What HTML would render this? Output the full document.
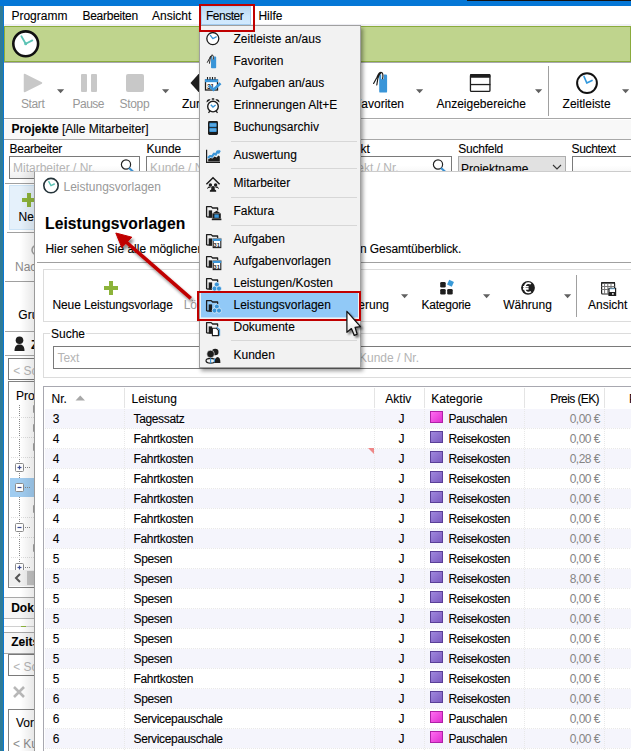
<!DOCTYPE html>
<html><head><meta charset="utf-8"><style>
html,body{margin:0;padding:0;width:631px;height:751px;overflow:hidden;background:#fff;font-family:"Liberation Sans", sans-serif;}
.a{position:absolute;display:block}
.t{position:absolute;white-space:nowrap;font-family:"Liberation Sans", sans-serif;-webkit-text-stroke-width:0.1px}
</style></head><body>
<div class="a" style="left:0px;top:0px;width:3px;height:751px;background:#2e7b97"></div><div class="a" style="left:3px;top:0px;width:1px;height:751px;background:#0b78d4"></div><div class="a" style="left:0px;top:0px;width:631px;height:6px;background:#0577d6"></div><div class="a" style="left:467px;top:0px;width:164px;height:1px;background:#151515"></div><div class="a" style="left:4px;top:6px;width:627px;height:18px;background:#fff"></div><div class="a" style="left:4px;top:24px;width:627px;height:2px;background:#f0f0f6"></div><div class="t " style="left:11.4px;top:9.00px;font-size:12px;line-height:14px;color:#000;letter-spacing:0px">Programm</div><div class="t " style="left:82.4px;top:9.00px;font-size:12px;line-height:14px;color:#000;letter-spacing:-0.25px">Bearbeiten</div><div class="t " style="left:152px;top:9.00px;font-size:12px;line-height:14px;color:#000;letter-spacing:0px">Ansicht</div><div class="t " style="left:258.4px;top:9.00px;font-size:12px;line-height:14px;color:#000;letter-spacing:0px">Hilfe</div><div class="a" style="left:201px;top:6px;width:50px;height:19px;background:linear-gradient(#bcd6ee,#cce6fc 55%,#d2eaff);box-sizing:border-box;border:1px solid #a6d0f4"></div><div class="t " style="left:206px;top:9.00px;font-size:12px;line-height:14px;color:#000;letter-spacing:-0.5px">Fenster</div><div class="a" style="left:4px;top:26px;width:627px;height:36px;background:#bfd48d;box-sizing:border-box;border:1px solid #8aab3c"></div><div class="a" style="left:4px;top:62px;width:627px;height:1px;background:#a8a8b0"></div><svg class="a" style="left:10px;top:28px;" width="32" height="32" viewBox="0 0 32 32"><circle cx="15.7" cy="15.8" r="12.4" fill="#fff" stroke="#111" stroke-width="2.6"/><path d="M11.4 8.2 L15.7 15.8 L22.3 12.4" fill="none" stroke="#5cc3b5" stroke-width="1.8" stroke-linecap="round" stroke-linejoin="round"/><circle cx="15.7" cy="15.8" r="1.5" fill="#5cc3b5"/></svg><div class="a" style="left:4px;top:63px;width:627px;height:55px;background:#fff"></div><div class="a" style="left:4px;top:118px;width:627px;height:1px;background:#a8a8a8"></div><svg class="a" style="left:22px;top:72px;" width="24" height="22" viewBox="0 0 24 22"><path d="M2.5 2.5 L19.5 11 L2.5 19.5 Z" fill="#c8c8c8" stroke="#c8c8c8" stroke-width="1.5" stroke-linejoin="round"/></svg><svg class="a" style="left:57px;top:89px;" width="8" height="5" viewBox="0 0 8 5"><path d="M0 0.2 H7.2 L3.6 4.2 Z" fill="#606060"/></svg><div class="t " style="left:21px;top:97.00px;font-size:12px;line-height:14px;color:#989898;-webkit-text-stroke-width:0;letter-spacing:-0.4px">Start</div><div class="a" style="left:81px;top:74px;width:6px;height:18px;background:#c8c8c8;border-radius:1px"></div><div class="a" style="left:91px;top:74px;width:6px;height:18px;background:#c8c8c8;border-radius:1px"></div><div class="t " style="left:72.5px;top:97.00px;font-size:12px;line-height:14px;color:#989898;-webkit-text-stroke-width:0;letter-spacing:-0.5px">Pause</div><div class="a" style="left:126px;top:74px;width:18px;height:18px;background:#c8c8c8;border-radius:2px"></div><div class="t " style="left:119.5px;top:97.00px;font-size:12px;line-height:14px;color:#989898;-webkit-text-stroke-width:0;letter-spacing:-0.3px">Stopp</div><svg class="a" style="left:162px;top:88.5px;" width="8" height="5" viewBox="0 0 8 5"><path d="M0 0.2 H7.2 L3.6 4.2 Z" fill="#606060"/></svg><svg class="a" style="left:189px;top:73px;" width="12" height="20" viewBox="0 0 12 20"><path d="M1.5 10 L9.5 1 L11 1 L11 19 L9.5 19 Z" fill="#1e1e1e"/></svg><div class="t " style="left:182px;top:97.00px;font-size:12px;line-height:14px;color:#000;">Zurück</div><svg class="a" style="left:371px;top:71px;" width="20" height="24" viewBox="0 0 20 24"><path d="M9.4 3.6 H10.2 V7.2 C10.2 8.6 12.8 8.6 12.8 7.2 V3.6 H14.9 Q16.1 3.6 16.1 4.8 V20.4 Q16.1 21.6 14.9 21.6 H9.4 Q8.2 21.6 8.2 20.4 V4.8 Q8.2 3.6 9.4 3.6 Z" fill="#3a95d8"/><path d="M11.6 7.8 C12.4 4 11.8 1.4 10 1.4 C8.2 1.4 7 3.6 6 6.2 L2.6 12.5 M9.6 2.2 C8.2 3 7.4 5.4 6.8 7.6 L5.8 14" fill="none" stroke="#1a1a1a" stroke-width="1.15" stroke-linecap="round"/></svg><div class="t" style="right:227px;top:97.00px;font-size:12px;line-height:14px;color:#000;">Favoriten</div><svg class="a" style="left:415.5px;top:88.5px;" width="8" height="5" viewBox="0 0 8 5"><path d="M0 0.2 H7.2 L3.6 4.2 Z" fill="#606060"/></svg><svg class="a" style="left:469px;top:73px;" width="22" height="20" viewBox="0 0 22 20"><rect x="1.45" y="1.65" width="19.5" height="16.8" rx="1" fill="#fff" stroke="#1e1e1e" stroke-width="1.3"/><rect x="1" y="1.1" width="20.4" height="3.6" rx="1" fill="#1e1e1e"/><rect x="1" y="10.9" width="20.4" height="1.3" fill="#1e1e1e"/></svg><div class="t " style="left:436.5px;top:97.00px;font-size:12px;line-height:14px;color:#000;">Anzeigebereiche</div><svg class="a" style="left:534.7px;top:88.5px;" width="8" height="5" viewBox="0 0 8 5"><path d="M0 0.2 H7.2 L3.6 4.2 Z" fill="#606060"/></svg><div class="a" style="left:548px;top:66px;width:1px;height:50px;background:#a0a0a0"></div><svg class="a" style="left:574px;top:70px;" width="26" height="26" viewBox="0 0 26 26"><circle cx="13" cy="13.1" r="9.9" fill="#fff" stroke="#111" stroke-width="2.0"/><path d="M10 6.5 L12.8 13 L18 10.5" fill="none" stroke="#3399dd" stroke-width="1.7" stroke-linecap="round" stroke-linejoin="round"/></svg><div class="t " style="left:562.6px;top:97.00px;font-size:12px;line-height:14px;color:#000;">Zeitleiste</div><svg class="a" style="left:622px;top:88.5px;" width="8" height="5" viewBox="0 0 8 5"><path d="M0 0.2 H7.2 L3.6 4.2 Z" fill="#606060"/></svg><div class="a" style="left:4px;top:120px;width:627px;height:19px;background:#f8f8f8"></div><div class="a" style="left:4px;top:139px;width:627px;height:1px;background:#a8a8a8"></div><div class="t " style="left:11.4px;top:122.00px;font-size:12px;line-height:14px;color:#000;font-weight:bold;">Projekte</div><div class="t " style="left:62px;top:122.00px;font-size:12px;line-height:14px;color:#000;">[Alle Mitarbeiter]</div><div class="t " style="left:9.6px;top:142.00px;font-size:12px;line-height:14px;color:#000;letter-spacing:-0.3px">Bearbeiter</div><div class="t " style="left:146.6px;top:142.00px;font-size:12px;line-height:14px;color:#000;">Kunde</div><div class="t " style="left:332.5px;top:142.00px;font-size:12px;line-height:14px;color:#000;">Projekt</div><div class="t " style="left:458.3px;top:142.00px;font-size:12px;line-height:14px;color:#000;letter-spacing:-0.25px">Suchfeld</div><div class="t " style="left:571.5px;top:142.00px;font-size:12px;line-height:14px;color:#000;letter-spacing:-0.35px">Suchtext</div><div class="a" style="left:9px;top:156px;width:131px;height:23px;box-sizing:border-box;border:1px solid #7a7a7a;background:linear-gradient(#fff 40%,#f0f0f0)"></div><div class="t " style="left:13px;top:161.00px;font-size:12px;line-height:14px;color:#b4b4b4;-webkit-text-stroke-width:0;">Mitarbeiter / Nr.</div><svg class="a" style="left:120px;top:159px;" width="16" height="14" viewBox="0 0 16 14"><circle cx="6" cy="5.5" r="4.6" fill="none" stroke="#222" stroke-width="1.2"/><path d="M9 9 L13.5 13" stroke="#3a8fd0" stroke-width="2.2"/></svg><div class="a" style="left:146px;top:156px;width:160px;height:23px;box-sizing:border-box;border:1px solid #7a7a7a;background:linear-gradient(#fff 40%,#f0f0f0)"></div><div class="t " style="left:150px;top:161.00px;font-size:12px;line-height:14px;color:#b4b4b4;-webkit-text-stroke-width:0;">Kunde / Nr.</div><div class="a" style="left:332px;top:156px;width:120px;height:23px;box-sizing:border-box;border:1px solid #7a7a7a;background:linear-gradient(#fff 40%,#f0f0f0)"></div><div class="t " style="left:336px;top:161.00px;font-size:12px;line-height:14px;color:#b4b4b4;-webkit-text-stroke-width:0;">Projekt / Nr.</div><svg class="a" style="left:432px;top:159px;" width="16" height="14" viewBox="0 0 16 14"><circle cx="6" cy="5.5" r="4.6" fill="none" stroke="#222" stroke-width="1.2"/><path d="M9 9 L13.5 13" stroke="#3a8fd0" stroke-width="2.2"/></svg><div class="a" style="left:458px;top:156px;width:108px;height:23px;box-sizing:border-box;border:1px solid #adadad;background:#e1e1e1"></div><div class="t " style="left:461px;top:162.00px;font-size:12px;line-height:14px;color:#000;">Projektname</div><svg class="a" style="left:552px;top:164px;" width="10" height="6" viewBox="0 0 10 6"><path d="M1 1 L5 5 L9 1" fill="none" stroke="#333" stroke-width="1.1"/></svg><div class="a" style="left:572px;top:156px;width:70px;height:23px;box-sizing:border-box;border:1px solid #7a7a7a;background:linear-gradient(#fff 40%,#f0f0f0)"></div><div class="a" style="left:4px;top:179px;width:30px;height:572px;background:#fff"></div><div class="a" style="left:5px;top:183px;width:29px;height:1px;background:#a0a0a0"></div><div class="a" style="left:9px;top:185px;width:30px;height:45px;box-sizing:border-box;border:1px solid #cce4f7;background:#e5f1fb"></div><div class="a" style="left:27px;top:193px;width:4px;height:14px;background:#8cb33a"></div><div class="a" style="left:22px;top:198px;width:14px;height:4px;background:#8cb33a"></div><div class="t " style="left:18.6px;top:210.00px;font-size:12px;line-height:14px;color:#000;">Neue</div><div class="a" style="left:7px;top:232px;width:27px;height:1px;background:#a0a0a0"></div><svg class="a" style="left:29px;top:244px;" width="8" height="12" viewBox="0 0 8 12"><circle cx="8" cy="6" r="5" fill="none" stroke="#a0a0a0" stroke-width="1.5"/></svg><div class="t " style="left:15px;top:260.00px;font-size:12px;line-height:14px;color:#8c8c8c;-webkit-text-stroke-width:0;">Nachbearb</div><div class="a" style="left:5px;top:281px;width:29px;height:1px;background:#a0a0a0"></div><div class="t " style="left:18.3px;top:308.00px;font-size:12px;line-height:14px;color:#000;">Gruppe</div><div class="a" style="left:5px;top:331px;width:29px;height:1px;background:#a8a8a8"></div><svg class="a" style="left:14px;top:336px;" width="12" height="16" viewBox="0 0 12 16"><circle cx="5.5" cy="4.2" r="3.8" fill="#1e1e1e"/><path d="M0.5 15 C0.5 10 2.5 8.5 5.5 8.5 C8.5 8.5 10.5 10 10.5 15 Z" fill="#1e1e1e"/></svg><div class="t " style="left:31px;top:338.00px;font-size:12px;line-height:14px;color:#000;font-weight:bold;">Z</div><div class="a" style="left:5px;top:355px;width:29px;height:1px;background:#a8a8a8"></div><div class="a" style="left:8px;top:358px;width:30px;height:22px;box-sizing:border-box;border:1px solid #7a7a7a;background:#fff"></div><div class="t " style="left:13.2px;top:364.00px;font-size:12px;line-height:14px;color:#b4b4b4;-webkit-text-stroke-width:0;">&lt; Sc</div><div class="a" style="left:8px;top:381px;width:30px;height:207px;box-sizing:border-box;border:1px solid #828282;background:#fff"></div><div class="t " style="left:16px;top:389.00px;font-size:12px;line-height:14px;color:#000;">Projekte</div><div class="a" style="left:19px;top:405px;width:1px;height:164px;background-image:linear-gradient(#888 50%, transparent 50%);background-size:1px 2px"></div><div class="a" style="left:11px;top:417px;width:23px;height:1px;background-image:linear-gradient(90deg,#ddd 50%, transparent 50%);background-size:2px 1px"></div><div class="a" style="left:11px;top:437px;width:23px;height:1px;background-image:linear-gradient(90deg,#ddd 50%, transparent 50%);background-size:2px 1px"></div><div class="a" style="left:11px;top:457px;width:23px;height:1px;background-image:linear-gradient(90deg,#ddd 50%, transparent 50%);background-size:2px 1px"></div><div class="a" style="left:11px;top:517px;width:23px;height:1px;background-image:linear-gradient(90deg,#ddd 50%, transparent 50%);background-size:2px 1px"></div><div class="a" style="left:11px;top:537px;width:23px;height:1px;background-image:linear-gradient(90deg,#ddd 50%, transparent 50%);background-size:2px 1px"></div><div class="a" style="left:11px;top:557px;width:23px;height:1px;background-image:linear-gradient(90deg,#ddd 50%, transparent 50%);background-size:2px 1px"></div><div class="a" style="left:33px;top:405px;width:2px;height:8px;background:#a0a0a0;border-radius:1px"></div><div class="a" style="left:33px;top:424px;width:2px;height:8px;background:#a0a0a0;border-radius:1px"></div><div class="a" style="left:33px;top:443px;width:2px;height:8px;background:#a0a0a0;border-radius:1px"></div><div class="a" style="left:33px;top:505px;width:2px;height:8px;background:#a0a0a0;border-radius:1px"></div><div class="a" style="left:33px;top:544px;width:2px;height:8px;background:#a0a0a0;border-radius:1px"></div><div class="a" style="left:10px;top:478px;width:24px;height:19px;background:#a0ccf0"></div><svg class="a" style="left:15px;top:463px;" width="9" height="9" viewBox="0 0 9 9"><rect x="0.5" y="0.5" width="8" height="8" rx="1" fill="#fff" stroke="#8a8a8a"/><path d="M2.5 4.5 H6.5" stroke="#3a4a90" stroke-width="1.2"/><path d="M4.5 2.5 V6.5" stroke="#3a4a90" stroke-width="1.2"/></svg><div class="a" style="left:25px;top:467px;width:6px;height:1px;background-image:linear-gradient(90deg,#888 50%, transparent 50%);background-size:2px 1px"></div><svg class="a" style="left:15px;top:483px;" width="9" height="9" viewBox="0 0 9 9"><rect x="0.5" y="0.5" width="8" height="8" rx="1" fill="#fff" stroke="#8a8a8a"/><path d="M2.5 4.5 H6.5" stroke="#3a4a90" stroke-width="1.2"/></svg><div class="a" style="left:25px;top:487px;width:6px;height:1px;background-image:linear-gradient(90deg,#888 50%, transparent 50%);background-size:2px 1px"></div><svg class="a" style="left:15px;top:523px;" width="9" height="9" viewBox="0 0 9 9"><rect x="0.5" y="0.5" width="8" height="8" rx="1" fill="#fff" stroke="#8a8a8a"/><path d="M2.5 4.5 H6.5" stroke="#3a4a90" stroke-width="1.2"/></svg><div class="a" style="left:25px;top:527px;width:6px;height:1px;background-image:linear-gradient(90deg,#888 50%, transparent 50%);background-size:2px 1px"></div><svg class="a" style="left:15px;top:563px;" width="9" height="9" viewBox="0 0 9 9"><rect x="0.5" y="0.5" width="8" height="8" rx="1" fill="#fff" stroke="#8a8a8a"/><path d="M2.5 4.5 H6.5" stroke="#3a4a90" stroke-width="1.2"/><path d="M4.5 2.5 V6.5" stroke="#3a4a90" stroke-width="1.2"/></svg><div class="a" style="left:25px;top:567px;width:6px;height:1px;background-image:linear-gradient(90deg,#888 50%, transparent 50%);background-size:2px 1px"></div><div class="a" style="left:9px;top:570px;width:30px;height:16px;background:#f0f0f0"></div><svg class="a" style="left:14px;top:573px;" width="8" height="10" viewBox="0 0 8 10"><path d="M6 1 L2 5 L6 9" fill="none" stroke="#555" stroke-width="2"/></svg><div class="a" style="left:27px;top:571px;width:10px;height:14px;background:#c2c2c2"></div><div class="a" style="left:4px;top:597px;width:30px;height:1px;background:#a8a8a8"></div><div class="a" style="left:4px;top:598px;width:30px;height:20px;background:#f6f6f6"></div><div class="t " style="left:11.2px;top:601.00px;font-size:12px;line-height:14px;color:#000;font-weight:bold;">Dokumente</div><div class="a" style="left:4px;top:618px;width:30px;height:1px;background:#b8b8b8"></div><div class="a" style="left:4px;top:626px;width:30px;height:1px;background:#d0d0d0"></div><div class="a" style="left:21px;top:626px;width:5px;height:1px;background:#8cb33a"></div><div class="a" style="left:4px;top:632px;width:30px;height:1px;background:#a8a8a8"></div><div class="a" style="left:4px;top:633px;width:30px;height:20px;background:#f6f6f6"></div><div class="t " style="left:11.2px;top:635.00px;font-size:12px;line-height:14px;color:#000;font-weight:bold;">Zeitstempel</div><div class="a" style="left:4px;top:653px;width:30px;height:1px;background:#a8a8a8"></div><div class="a" style="left:8px;top:654px;width:30px;height:22px;box-sizing:border-box;border:1px solid #7a7a7a;background:#fff"></div><div class="t " style="left:13.2px;top:660.00px;font-size:12px;line-height:14px;color:#b4b4b4;-webkit-text-stroke-width:0;">&lt; Sc</div><svg class="a" style="left:12px;top:685px;" width="14" height="14" viewBox="0 0 14 14"><path d="M2 2 L12 12 M12 2 L2 12" stroke="#b8b8b8" stroke-width="2.6"/></svg><div class="a" style="left:8px;top:709px;width:30px;height:50px;box-sizing:border-box;border:1px solid #828282;background:#fff"></div><div class="t " style="left:16px;top:716.00px;font-size:12px;line-height:14px;color:#000;">Vorlage</div><div class="t " style="left:13px;top:737.00px;font-size:12px;line-height:14px;color:#8c8c8c;-webkit-text-stroke-width:0;">&lt; Kunde</div><div class="a" style="left:20px;top:171px;width:14px;height:580px;background:linear-gradient(90deg,rgba(0,0,0,0),rgba(0,0,0,0.09))"></div><div class="a" style="left:34px;top:171px;width:597px;height:580px;background:#fff;box-sizing:border-box;border-left:1px solid #9a9a9a;border-top:1px solid #cccccc"></div><svg class="a" style="left:42px;top:177px;" width="18" height="18" viewBox="0 0 18 18"><circle cx="9" cy="8.6" r="7.2" fill="#fff" stroke="#25343a" stroke-width="1.6"/><path d="M6.8 4.6 L9 8.6 L12.3 7" fill="none" stroke="#5cc3b5" stroke-width="1.4" stroke-linecap="round"/></svg><div class="t " style="left:63.5px;top:180.00px;font-size:12px;line-height:14px;color:#999;-webkit-text-stroke-width:0;">Leistungsvorlagen</div><div class="t " style="left:45px;top:214.00px;font-size:15.6px;line-height:19px;color:#000;font-weight:bold;letter-spacing:0.1px">Leistungsvorlagen</div><div class="t " style="left:45.4px;top:242.00px;font-size:12px;line-height:14px;color:#000;">Hier sehen Sie alle möglichen Leistungsvorlagen und</div><div class="t " style="left:360px;top:242.00px;font-size:12px;line-height:14px;color:#000;letter-spacing:-0.12px">n Gesamtüberblick.</div><div class="a" style="left:37px;top:262px;width:594px;height:1px;background:#a0a0a0"></div><div class="a" style="left:43px;top:269px;width:600px;height:53px;box-sizing:border-box;border:1px solid #dcdcdc"></div><div class="a" style="left:109px;top:281px;width:4px;height:14px;background:#8cb33a"></div><div class="a" style="left:104px;top:286px;width:14px;height:4px;background:#8cb33a"></div><div class="t " style="left:52.5px;top:298.00px;font-size:12px;line-height:14px;color:#000;letter-spacing:-0.12px">Neue Leistungsvorlage</div><div class="t " style="left:183.7px;top:298.00px;font-size:12px;line-height:14px;color:#999;-webkit-text-stroke-width:0;">Löschen</div><div class="t" style="right:242px;top:298.00px;font-size:12px;line-height:14px;color:#000;">Aktivierung</div><svg class="a" style="left:401px;top:293.5px;" width="8" height="5" viewBox="0 0 8 5"><path d="M0 0.2 H7.2 L3.6 4.2 Z" fill="#606060"/></svg><svg class="a" style="left:438px;top:278px;" width="18" height="18" viewBox="0 0 18 18"><rect x="2.2" y="4" width="5.5" height="5.6" rx="1.3" fill="#1e1e1e"/><rect x="2.2" y="11" width="5.5" height="5.6" rx="1.3" fill="#1e1e1e"/><rect x="9.2" y="11" width="5.5" height="5.6" rx="1.3" fill="#1e1e1e"/><rect x="9.9" y="2.7" width="5.2" height="5.2" fill="#3a9ad8" transform="rotate(25 12.5 5.3)"/></svg><div class="t " style="left:421.6px;top:298.00px;font-size:12px;line-height:14px;color:#000;letter-spacing:-0.25px">Kategorie</div><svg class="a" style="left:483px;top:293.5px;" width="8" height="5" viewBox="0 0 8 5"><path d="M0 0.2 H7.2 L3.6 4.2 Z" fill="#606060"/></svg><svg class="a" style="left:520px;top:280px;" width="16" height="16" viewBox="0 0 16 16"><circle cx="8" cy="7.8" r="6.9" fill="#1e1e1e"/><path d="M10.9 4 C10.2 3.4 9.4 3.1 8.5 3.1 C6.2 3.1 4.7 5.2 4.7 7.8 C4.7 10.4 6.2 12.5 8.5 12.5 C9.4 12.5 10.2 12.2 10.9 11.6 M3 6.8 H8.6 M3 8.9 H8.6" fill="none" stroke="#fff" stroke-width="1.6"/></svg><div class="t " style="left:503.2px;top:298.00px;font-size:12px;line-height:14px;color:#000;">Währung</div><svg class="a" style="left:564px;top:293.5px;" width="8" height="5" viewBox="0 0 8 5"><path d="M0 0.2 H7.2 L3.6 4.2 Z" fill="#606060"/></svg><div class="a" style="left:576px;top:275px;width:1px;height:42px;background:#a0a0a0"></div><svg class="a" style="left:600px;top:281px;" width="17" height="16" viewBox="0 0 17 16"><rect x="1.6" y="1.6" width="13" height="11.4" rx="1" fill="#fff" stroke="#222" stroke-width="1.2"/><rect x="1.2" y="1" width="13.8" height="1.6" fill="#222"/><path d="M1.5 5.5 H14.5 M1.5 8.5 H14.5 M4.6 2.5 V13 M7.8 2.5 V13 M11 2.5 V13" stroke="#777" stroke-width="1"/><rect x="8.4" y="6.8" width="7.8" height="8.2" fill="#1e1e1e"/><rect x="9.6" y="7.6" width="5.4" height="3.4" fill="#fff"/><path d="M9.6 7.8 H15" stroke="#3a9ad8" stroke-width="0.6"/><rect x="12.2" y="12" width="1.4" height="1.8" fill="#fff"/></svg><div class="t " style="left:588px;top:298.00px;font-size:12px;line-height:14px;color:#000;">Ansicht</div><div class="a" style="left:43px;top:333px;width:600px;height:45px;box-sizing:border-box;border:1px solid #dcdcdc"></div><div class="t " style="left:50px;top:327.00px;font-size:12px;line-height:14px;color:#000;background:#fff;padding:0 1px">Suche</div><div class="a" style="left:53px;top:346px;width:600px;height:23px;box-sizing:border-box;border:1px solid #7a7a7a;background:#fff"></div><div class="t " style="left:57.4px;top:351.00px;font-size:12px;line-height:14px;color:#b4b4b4;-webkit-text-stroke-width:0;">Text</div><div class="t " style="left:359px;top:351.00px;font-size:12px;line-height:14px;color:#b4b4b4;-webkit-text-stroke-width:0;">Kunde / Nr.</div><div class="a" style="left:43px;top:386px;width:600px;height:380px;box-sizing:border-box;border:1px solid #a8a8b0;background:#fff"></div><div class="t " style="left:51.5px;top:392.00px;font-size:12px;line-height:14px;color:#000;">Nr.</div><svg class="a" style="left:75px;top:395px;" width="11" height="6" viewBox="0 0 11 6"><path d="M0.5 5.5 L5.25 0.5 L10 5.5 Z" fill="#a8a8a8"/></svg><div class="t " style="left:131.5px;top:392.00px;font-size:12px;line-height:14px;color:#000;">Leistung</div><div class="t " style="left:385.3px;top:392.00px;font-size:12px;line-height:14px;color:#000;">Aktiv</div><div class="t " style="left:431.3px;top:392.00px;font-size:12px;line-height:14px;color:#000;">Kategorie</div><div class="t" style="right:32px;top:392.00px;font-size:12px;line-height:14px;color:#000;letter-spacing:-0.6px">Preis (EK)</div><div class="t " style="left:629px;top:392.00px;font-size:12px;line-height:14px;color:#000;">Preis (VK)</div><div class="a" style="left:124px;top:388px;width:1px;height:20px;background:#e4e4e4"></div><div class="a" style="left:374px;top:388px;width:1px;height:20px;background:#e4e4e4"></div><div class="a" style="left:424px;top:388px;width:1px;height:20px;background:#e4e4e4"></div><div class="a" style="left:524px;top:388px;width:1px;height:20px;background:#e4e4e4"></div><div class="a" style="left:604px;top:388px;width:1px;height:20px;background:#e4e4e4"></div><div class="a" style="left:45px;top:409px;width:590px;height:19px;background:#f5f5fc"></div><div class="a" style="left:45px;top:428px;width:590px;height:1px;background-image:linear-gradient(90deg,#e8e8e8 50%,transparent 50%);background-size:2px 1px"></div><div class="t " style="left:52.8px;top:412.00px;font-size:12px;line-height:14px;color:#000;">3</div><div class="t " style="left:133.5px;top:412.00px;font-size:12px;line-height:14px;color:#000;letter-spacing:-0.35px">Tagessatz</div><div class="t " style="left:398.5px;top:412.00px;font-size:12px;line-height:14px;color:#000;">J</div><div class="a" style="left:430px;top:411px;width:13px;height:12px;box-sizing:border-box;background:linear-gradient(135deg,#ff6cf0,#e030d0);border:1px solid #b020a8"></div><div class="t " style="left:448.4px;top:412.00px;font-size:12px;line-height:14px;color:#000;letter-spacing:-0.4px">Pauschalen</div><div class="t" style="right:31px;top:412.00px;font-size:12px;line-height:14px;color:#858585;-webkit-text-stroke-width:0;letter-spacing:-0.5px">0,00 €</div><div class="a" style="left:45px;top:448px;width:590px;height:1px;background-image:linear-gradient(90deg,#e8e8e8 50%,transparent 50%);background-size:2px 1px"></div><div class="t " style="left:52.8px;top:432.00px;font-size:12px;line-height:14px;color:#000;">4</div><div class="t " style="left:133.5px;top:432.00px;font-size:12px;line-height:14px;color:#000;letter-spacing:-0.35px">Fahrtkosten</div><div class="t " style="left:398.5px;top:432.00px;font-size:12px;line-height:14px;color:#000;">J</div><div class="a" style="left:430px;top:431px;width:13px;height:12px;box-sizing:border-box;background:linear-gradient(135deg,#9f88dd,#7c5cc0);border:1px solid #5a3f98"></div><div class="t " style="left:448.4px;top:432.00px;font-size:12px;line-height:14px;color:#000;letter-spacing:-0.4px">Reisekosten</div><div class="t" style="right:31px;top:432.00px;font-size:12px;line-height:14px;color:#858585;-webkit-text-stroke-width:0;letter-spacing:-0.5px">0,00 €</div><div class="a" style="left:45px;top:449px;width:590px;height:19px;background:#f5f5fc"></div><div class="a" style="left:45px;top:468px;width:590px;height:1px;background-image:linear-gradient(90deg,#e8e8e8 50%,transparent 50%);background-size:2px 1px"></div><div class="t " style="left:52.8px;top:452.00px;font-size:12px;line-height:14px;color:#000;">4</div><div class="t " style="left:133.5px;top:452.00px;font-size:12px;line-height:14px;color:#000;letter-spacing:-0.35px">Fahrtkosten</div><div class="t " style="left:398.5px;top:452.00px;font-size:12px;line-height:14px;color:#000;">J</div><div class="a" style="left:430px;top:451px;width:13px;height:12px;box-sizing:border-box;background:linear-gradient(135deg,#9f88dd,#7c5cc0);border:1px solid #5a3f98"></div><div class="t " style="left:448.4px;top:452.00px;font-size:12px;line-height:14px;color:#000;letter-spacing:-0.4px">Reisekosten</div><div class="t" style="right:31px;top:452.00px;font-size:12px;line-height:14px;color:#858585;-webkit-text-stroke-width:0;letter-spacing:-0.5px">0,28 €</div><div class="a" style="left:45px;top:488px;width:590px;height:1px;background-image:linear-gradient(90deg,#e8e8e8 50%,transparent 50%);background-size:2px 1px"></div><div class="t " style="left:52.8px;top:472.00px;font-size:12px;line-height:14px;color:#000;">4</div><div class="t " style="left:133.5px;top:472.00px;font-size:12px;line-height:14px;color:#000;letter-spacing:-0.35px">Fahrtkosten</div><div class="t " style="left:398.5px;top:472.00px;font-size:12px;line-height:14px;color:#000;">J</div><div class="a" style="left:430px;top:471px;width:13px;height:12px;box-sizing:border-box;background:linear-gradient(135deg,#9f88dd,#7c5cc0);border:1px solid #5a3f98"></div><div class="t " style="left:448.4px;top:472.00px;font-size:12px;line-height:14px;color:#000;letter-spacing:-0.4px">Reisekosten</div><div class="t" style="right:31px;top:472.00px;font-size:12px;line-height:14px;color:#858585;-webkit-text-stroke-width:0;letter-spacing:-0.5px">0,00 €</div><div class="a" style="left:45px;top:489px;width:590px;height:19px;background:#f5f5fc"></div><div class="a" style="left:45px;top:508px;width:590px;height:1px;background-image:linear-gradient(90deg,#e8e8e8 50%,transparent 50%);background-size:2px 1px"></div><div class="t " style="left:52.8px;top:492.00px;font-size:12px;line-height:14px;color:#000;">4</div><div class="t " style="left:133.5px;top:492.00px;font-size:12px;line-height:14px;color:#000;letter-spacing:-0.35px">Fahrtkosten</div><div class="t " style="left:398.5px;top:492.00px;font-size:12px;line-height:14px;color:#000;">J</div><div class="a" style="left:430px;top:491px;width:13px;height:12px;box-sizing:border-box;background:linear-gradient(135deg,#9f88dd,#7c5cc0);border:1px solid #5a3f98"></div><div class="t " style="left:448.4px;top:492.00px;font-size:12px;line-height:14px;color:#000;letter-spacing:-0.4px">Reisekosten</div><div class="t" style="right:31px;top:492.00px;font-size:12px;line-height:14px;color:#858585;-webkit-text-stroke-width:0;letter-spacing:-0.5px">0,00 €</div><div class="a" style="left:45px;top:528px;width:590px;height:1px;background-image:linear-gradient(90deg,#e8e8e8 50%,transparent 50%);background-size:2px 1px"></div><div class="t " style="left:52.8px;top:512.00px;font-size:12px;line-height:14px;color:#000;">4</div><div class="t " style="left:133.5px;top:512.00px;font-size:12px;line-height:14px;color:#000;letter-spacing:-0.35px">Fahrtkosten</div><div class="t " style="left:398.5px;top:512.00px;font-size:12px;line-height:14px;color:#000;">J</div><div class="a" style="left:430px;top:511px;width:13px;height:12px;box-sizing:border-box;background:linear-gradient(135deg,#9f88dd,#7c5cc0);border:1px solid #5a3f98"></div><div class="t " style="left:448.4px;top:512.00px;font-size:12px;line-height:14px;color:#000;letter-spacing:-0.4px">Reisekosten</div><div class="t" style="right:31px;top:512.00px;font-size:12px;line-height:14px;color:#858585;-webkit-text-stroke-width:0;letter-spacing:-0.5px">0,00 €</div><div class="a" style="left:45px;top:529px;width:590px;height:19px;background:#f5f5fc"></div><div class="a" style="left:45px;top:548px;width:590px;height:1px;background-image:linear-gradient(90deg,#e8e8e8 50%,transparent 50%);background-size:2px 1px"></div><div class="t " style="left:52.8px;top:532.00px;font-size:12px;line-height:14px;color:#000;">4</div><div class="t " style="left:133.5px;top:532.00px;font-size:12px;line-height:14px;color:#000;letter-spacing:-0.35px">Fahrtkosten</div><div class="t " style="left:398.5px;top:532.00px;font-size:12px;line-height:14px;color:#000;">J</div><div class="a" style="left:430px;top:531px;width:13px;height:12px;box-sizing:border-box;background:linear-gradient(135deg,#9f88dd,#7c5cc0);border:1px solid #5a3f98"></div><div class="t " style="left:448.4px;top:532.00px;font-size:12px;line-height:14px;color:#000;letter-spacing:-0.4px">Reisekosten</div><div class="t" style="right:31px;top:532.00px;font-size:12px;line-height:14px;color:#858585;-webkit-text-stroke-width:0;letter-spacing:-0.5px">0,00 €</div><div class="a" style="left:45px;top:568px;width:590px;height:1px;background-image:linear-gradient(90deg,#e8e8e8 50%,transparent 50%);background-size:2px 1px"></div><div class="t " style="left:52.8px;top:552.00px;font-size:12px;line-height:14px;color:#000;">5</div><div class="t " style="left:133.5px;top:552.00px;font-size:12px;line-height:14px;color:#000;letter-spacing:-0.35px">Spesen</div><div class="t " style="left:398.5px;top:552.00px;font-size:12px;line-height:14px;color:#000;">J</div><div class="a" style="left:430px;top:551px;width:13px;height:12px;box-sizing:border-box;background:linear-gradient(135deg,#9f88dd,#7c5cc0);border:1px solid #5a3f98"></div><div class="t " style="left:448.4px;top:552.00px;font-size:12px;line-height:14px;color:#000;letter-spacing:-0.4px">Reisekosten</div><div class="t" style="right:31px;top:552.00px;font-size:12px;line-height:14px;color:#858585;-webkit-text-stroke-width:0;letter-spacing:-0.5px">0,00 €</div><div class="a" style="left:45px;top:569px;width:590px;height:19px;background:#f5f5fc"></div><div class="a" style="left:45px;top:588px;width:590px;height:1px;background-image:linear-gradient(90deg,#e8e8e8 50%,transparent 50%);background-size:2px 1px"></div><div class="t " style="left:52.8px;top:572.00px;font-size:12px;line-height:14px;color:#000;">5</div><div class="t " style="left:133.5px;top:572.00px;font-size:12px;line-height:14px;color:#000;letter-spacing:-0.35px">Spesen</div><div class="t " style="left:398.5px;top:572.00px;font-size:12px;line-height:14px;color:#000;">J</div><div class="a" style="left:430px;top:571px;width:13px;height:12px;box-sizing:border-box;background:linear-gradient(135deg,#9f88dd,#7c5cc0);border:1px solid #5a3f98"></div><div class="t " style="left:448.4px;top:572.00px;font-size:12px;line-height:14px;color:#000;letter-spacing:-0.4px">Reisekosten</div><div class="t" style="right:31px;top:572.00px;font-size:12px;line-height:14px;color:#858585;-webkit-text-stroke-width:0;letter-spacing:-0.5px">8,00 €</div><div class="a" style="left:45px;top:608px;width:590px;height:1px;background-image:linear-gradient(90deg,#e8e8e8 50%,transparent 50%);background-size:2px 1px"></div><div class="t " style="left:52.8px;top:592.00px;font-size:12px;line-height:14px;color:#000;">5</div><div class="t " style="left:133.5px;top:592.00px;font-size:12px;line-height:14px;color:#000;letter-spacing:-0.35px">Spesen</div><div class="t " style="left:398.5px;top:592.00px;font-size:12px;line-height:14px;color:#000;">J</div><div class="a" style="left:430px;top:591px;width:13px;height:12px;box-sizing:border-box;background:linear-gradient(135deg,#9f88dd,#7c5cc0);border:1px solid #5a3f98"></div><div class="t " style="left:448.4px;top:592.00px;font-size:12px;line-height:14px;color:#000;letter-spacing:-0.4px">Reisekosten</div><div class="t" style="right:31px;top:592.00px;font-size:12px;line-height:14px;color:#858585;-webkit-text-stroke-width:0;letter-spacing:-0.5px">0,00 €</div><div class="a" style="left:45px;top:609px;width:590px;height:19px;background:#f5f5fc"></div><div class="a" style="left:45px;top:628px;width:590px;height:1px;background-image:linear-gradient(90deg,#e8e8e8 50%,transparent 50%);background-size:2px 1px"></div><div class="t " style="left:52.8px;top:612.00px;font-size:12px;line-height:14px;color:#000;">5</div><div class="t " style="left:133.5px;top:612.00px;font-size:12px;line-height:14px;color:#000;letter-spacing:-0.35px">Spesen</div><div class="t " style="left:398.5px;top:612.00px;font-size:12px;line-height:14px;color:#000;">J</div><div class="a" style="left:430px;top:611px;width:13px;height:12px;box-sizing:border-box;background:linear-gradient(135deg,#9f88dd,#7c5cc0);border:1px solid #5a3f98"></div><div class="t " style="left:448.4px;top:612.00px;font-size:12px;line-height:14px;color:#000;letter-spacing:-0.4px">Reisekosten</div><div class="t" style="right:31px;top:612.00px;font-size:12px;line-height:14px;color:#858585;-webkit-text-stroke-width:0;letter-spacing:-0.5px">0,00 €</div><div class="a" style="left:45px;top:648px;width:590px;height:1px;background-image:linear-gradient(90deg,#e8e8e8 50%,transparent 50%);background-size:2px 1px"></div><div class="t " style="left:52.8px;top:632.00px;font-size:12px;line-height:14px;color:#000;">5</div><div class="t " style="left:133.5px;top:632.00px;font-size:12px;line-height:14px;color:#000;letter-spacing:-0.35px">Spesen</div><div class="t " style="left:398.5px;top:632.00px;font-size:12px;line-height:14px;color:#000;">J</div><div class="a" style="left:430px;top:631px;width:13px;height:12px;box-sizing:border-box;background:linear-gradient(135deg,#9f88dd,#7c5cc0);border:1px solid #5a3f98"></div><div class="t " style="left:448.4px;top:632.00px;font-size:12px;line-height:14px;color:#000;letter-spacing:-0.4px">Reisekosten</div><div class="t" style="right:31px;top:632.00px;font-size:12px;line-height:14px;color:#858585;-webkit-text-stroke-width:0;letter-spacing:-0.5px">0,00 €</div><div class="a" style="left:45px;top:649px;width:590px;height:19px;background:#f5f5fc"></div><div class="a" style="left:45px;top:668px;width:590px;height:1px;background-image:linear-gradient(90deg,#e8e8e8 50%,transparent 50%);background-size:2px 1px"></div><div class="t " style="left:52.8px;top:652.00px;font-size:12px;line-height:14px;color:#000;">5</div><div class="t " style="left:133.5px;top:652.00px;font-size:12px;line-height:14px;color:#000;letter-spacing:-0.35px">Spesen</div><div class="t " style="left:398.5px;top:652.00px;font-size:12px;line-height:14px;color:#000;">J</div><div class="a" style="left:430px;top:651px;width:13px;height:12px;box-sizing:border-box;background:linear-gradient(135deg,#9f88dd,#7c5cc0);border:1px solid #5a3f98"></div><div class="t " style="left:448.4px;top:652.00px;font-size:12px;line-height:14px;color:#000;letter-spacing:-0.4px">Reisekosten</div><div class="t" style="right:31px;top:652.00px;font-size:12px;line-height:14px;color:#858585;-webkit-text-stroke-width:0;letter-spacing:-0.5px">0,00 €</div><div class="a" style="left:45px;top:688px;width:590px;height:1px;background-image:linear-gradient(90deg,#e8e8e8 50%,transparent 50%);background-size:2px 1px"></div><div class="t " style="left:52.8px;top:672.00px;font-size:12px;line-height:14px;color:#000;">5</div><div class="t " style="left:133.5px;top:672.00px;font-size:12px;line-height:14px;color:#000;letter-spacing:-0.35px">Fahrtkosten</div><div class="t " style="left:398.5px;top:672.00px;font-size:12px;line-height:14px;color:#000;">J</div><div class="a" style="left:430px;top:671px;width:13px;height:12px;box-sizing:border-box;background:linear-gradient(135deg,#9f88dd,#7c5cc0);border:1px solid #5a3f98"></div><div class="t " style="left:448.4px;top:672.00px;font-size:12px;line-height:14px;color:#000;letter-spacing:-0.4px">Reisekosten</div><div class="t" style="right:31px;top:672.00px;font-size:12px;line-height:14px;color:#858585;-webkit-text-stroke-width:0;letter-spacing:-0.5px">0,00 €</div><div class="a" style="left:45px;top:689px;width:590px;height:19px;background:#f5f5fc"></div><div class="a" style="left:45px;top:708px;width:590px;height:1px;background-image:linear-gradient(90deg,#e8e8e8 50%,transparent 50%);background-size:2px 1px"></div><div class="t " style="left:52.8px;top:692.00px;font-size:12px;line-height:14px;color:#000;">6</div><div class="t " style="left:133.5px;top:692.00px;font-size:12px;line-height:14px;color:#000;letter-spacing:-0.35px">Spesen</div><div class="t " style="left:398.5px;top:692.00px;font-size:12px;line-height:14px;color:#000;">J</div><div class="a" style="left:430px;top:691px;width:13px;height:12px;box-sizing:border-box;background:linear-gradient(135deg,#9f88dd,#7c5cc0);border:1px solid #5a3f98"></div><div class="t " style="left:448.4px;top:692.00px;font-size:12px;line-height:14px;color:#000;letter-spacing:-0.4px">Reisekosten</div><div class="t" style="right:31px;top:692.00px;font-size:12px;line-height:14px;color:#858585;-webkit-text-stroke-width:0;letter-spacing:-0.5px">0,00 €</div><div class="a" style="left:45px;top:728px;width:590px;height:1px;background-image:linear-gradient(90deg,#e8e8e8 50%,transparent 50%);background-size:2px 1px"></div><div class="t " style="left:52.8px;top:712.00px;font-size:12px;line-height:14px;color:#000;">6</div><div class="t " style="left:133.5px;top:712.00px;font-size:12px;line-height:14px;color:#000;letter-spacing:-0.35px">Servicepauschale</div><div class="t " style="left:398.5px;top:712.00px;font-size:12px;line-height:14px;color:#000;">J</div><div class="a" style="left:430px;top:711px;width:13px;height:12px;box-sizing:border-box;background:linear-gradient(135deg,#ff6cf0,#e030d0);border:1px solid #b020a8"></div><div class="t " style="left:448.4px;top:712.00px;font-size:12px;line-height:14px;color:#000;letter-spacing:-0.4px">Pauschalen</div><div class="t" style="right:31px;top:712.00px;font-size:12px;line-height:14px;color:#858585;-webkit-text-stroke-width:0;letter-spacing:-0.5px">0,00 €</div><div class="a" style="left:45px;top:729px;width:590px;height:19px;background:#f5f5fc"></div><div class="a" style="left:45px;top:748px;width:590px;height:1px;background-image:linear-gradient(90deg,#e8e8e8 50%,transparent 50%);background-size:2px 1px"></div><div class="t " style="left:52.8px;top:732.00px;font-size:12px;line-height:14px;color:#000;">6</div><div class="t " style="left:133.5px;top:732.00px;font-size:12px;line-height:14px;color:#000;letter-spacing:-0.35px">Servicepauschale</div><div class="t " style="left:398.5px;top:732.00px;font-size:12px;line-height:14px;color:#000;">J</div><div class="a" style="left:430px;top:731px;width:13px;height:12px;box-sizing:border-box;background:linear-gradient(135deg,#ff6cf0,#e030d0);border:1px solid #b020a8"></div><div class="t " style="left:448.4px;top:732.00px;font-size:12px;line-height:14px;color:#000;letter-spacing:-0.4px">Pauschalen</div><div class="t" style="right:31px;top:732.00px;font-size:12px;line-height:14px;color:#858585;-webkit-text-stroke-width:0;letter-spacing:-0.5px">0,00 €</div><div class="a" style="left:124px;top:409px;width:1px;height:342px;background-image:linear-gradient(#e8e8e8 50%,transparent 50%);background-size:1px 2px"></div><div class="a" style="left:374px;top:409px;width:1px;height:342px;background-image:linear-gradient(#e8e8e8 50%,transparent 50%);background-size:1px 2px"></div><div class="a" style="left:424px;top:409px;width:1px;height:342px;background-image:linear-gradient(#e8e8e8 50%,transparent 50%);background-size:1px 2px"></div><div class="a" style="left:524px;top:409px;width:1px;height:342px;background-image:linear-gradient(#e8e8e8 50%,transparent 50%);background-size:1px 2px"></div><div class="a" style="left:604px;top:409px;width:1px;height:342px;background-image:linear-gradient(#e8e8e8 50%,transparent 50%);background-size:1px 2px"></div><svg class="a" style="left:368px;top:448px;" width="7" height="7" viewBox="0 0 7 7"><path d="M0 0 H6 V6 Z" fill="#e88"/></svg><svg class="a" style="left:0;top:0" width="631" height="751" viewBox="0 0 631 751">
<defs><filter id="sh" x="-20%" y="-20%" width="140%" height="140%"><feGaussianBlur in="SourceAlpha" stdDeviation="1.6"/><feOffset dx="2" dy="2.5"/><feComponentTransfer><feFuncA type="linear" slope="0.45"/></feComponentTransfer><feMerge><feMergeNode/><feMergeNode in="SourceGraphic"/></feMerge></filter></defs>
<g filter="url(#sh)"><path d="M190.8 298.4 L125 241" stroke="#c00000" stroke-width="3.6" stroke-linecap="butt"/>
<path d="M115.8 233 L131.8 237.2 L121.8 247.6 Z" fill="#c00000" stroke="#c00000" stroke-width="1" stroke-linejoin="round"/></g>
</svg><div class="a" style="left:199px;top:25px;width:162px;height:343px;box-sizing:border-box;border:1px solid #a0a0a0;background:#f2f2f2;box-shadow:2px 3px 4px rgba(0,0,0,0.4)"></div><div class="a" style="left:231px;top:141px;width:126px;height:1px;background:#d7d7d7"></div><div class="a" style="left:231px;top:168px;width:126px;height:1px;background:#d7d7d7"></div><div class="a" style="left:231px;top:197px;width:126px;height:1px;background:#d7d7d7"></div><div class="a" style="left:231px;top:225px;width:126px;height:1px;background:#d7d7d7"></div><div class="a" style="left:231px;top:340px;width:126px;height:1px;background:#d7d7d7"></div><div class="a" style="left:201px;top:293px;width:157px;height:25px;background:#91c9f7;border-bottom:1px solid #c6e2f8;box-sizing:border-box"></div><svg class="a" style="left:204px;top:32px;" width="20" height="18" viewBox="0 0 20 18"><circle cx="8.8" cy="6.6" r="6" fill="#fff" stroke="#1c1c1c" stroke-width="1.3"/><path d="M6.4 3.4 L8.8 6.6 L12.2 4.9" fill="none" stroke="#3a95d8" stroke-width="1.3" stroke-linecap="round" stroke-linejoin="round"/></svg><div class="t " style="left:233.5px;top:32.00px;font-size:12px;line-height:14px;color:#000;">Zeitleiste an/aus</div><svg class="a" style="left:204px;top:54px;" width="20" height="18" viewBox="0 0 20 18"><g transform="translate(1.7,0.2) scale(0.65)"><path d="M9.4 3.6 H10.2 V7.2 C10.2 8.6 12.8 8.6 12.8 7.2 V3.6 H14.9 Q16.1 3.6 16.1 4.8 V20.4 Q16.1 21.6 14.9 21.6 H9.4 Q8.2 21.6 8.2 20.4 V4.8 Q8.2 3.6 9.4 3.6 Z" fill="#3a95d8"/><path d="M11.6 7.8 C12.4 4 11.8 1.4 10 1.4 C8.2 1.4 7 3.6 6 6.2 L2.6 12.5 M9.6 2.2 C8.2 3 7.4 5.4 6.8 7.6 L5.8 14" fill="none" stroke="#1c1c1c" stroke-width="1.5" stroke-linecap="round"/></g></svg><div class="t " style="left:233.5px;top:54.00px;font-size:12px;line-height:14px;color:#000;">Favoriten</div><svg class="a" style="left:204px;top:76px;" width="20" height="18" viewBox="0 0 20 18"><rect x="1.5" y="4" width="12" height="10" fill="#fff" stroke="#1c1c1c" stroke-width="1.3"/><rect x="1" y="3.2" width="13" height="3" fill="#3a95d8"/><path d="M3.5 1 V3.5 M6 1 V3.5 M8.5 1 V3.5 M11 1 V3.5" stroke="#1c1c1c" stroke-width="1.1"/><text x="3" y="12.9" font-size="6.5" font-family="Liberation Sans" font-weight="bold" fill="#1c1c1c">31</text><path d="M5 9.5 L9.5 13.8 L16.5 7.2" fill="none" stroke="#3a95d8" stroke-width="2.6"/></svg><div class="t " style="left:233.5px;top:76.00px;font-size:12px;line-height:14px;color:#000;">Aufgaben an/aus</div><svg class="a" style="left:204px;top:98px;" width="20" height="18" viewBox="0 0 20 18"><circle cx="9" cy="8.6" r="5.3" fill="#fff" stroke="#1c1c1c" stroke-width="1.4"/><path d="M2.6 4.6 C2.2 2 4.5 0.6 6.6 1.8 Z M15.4 4.6 C15.8 2 13.5 0.6 11.4 1.8 Z" fill="#1c1c1c"/><path d="M4.5 14.8 L5.8 13.2 M13.5 14.8 L12.2 13.2 M7.8 1 H10.2" stroke="#1c1c1c" stroke-width="1.3"/><path d="M6.8 6.8 L9 9 L11.6 7" fill="none" stroke="#3a95d8" stroke-width="1.4"/></svg><div class="t " style="left:233.5px;top:98.00px;font-size:12px;line-height:14px;color:#000;">Erinnerungen Alt+E</div><svg class="a" style="left:204px;top:120px;" width="20" height="18" viewBox="0 0 20 18"><rect x="4" y="1" width="10" height="14" rx="1.4" fill="#1c1c1c"/><rect x="5.5" y="2.8" width="7" height="4.4" fill="#3a95d8"/><rect x="5.5" y="8" width="7" height="4" fill="#3a95d8"/><path d="M5.5 5 H12.5 M5.5 10 H12.5" stroke="#8cc4ee" stroke-width="0.8"/></svg><div class="t " style="left:233.5px;top:120.00px;font-size:12px;line-height:14px;color:#000;">Buchungsarchiv</div><svg class="a" style="left:204px;top:148px;" width="20" height="18" viewBox="0 0 20 18"><path d="M2.6 1.8 V14.4 H16" fill="none" stroke="#1c1c1c" stroke-width="1.2"/><path d="M4.2 13.6 V11.2 L6.5 10 L8.5 10.6 L10.6 8.6 L12.6 9.6 L14.4 7.6 L15.8 8.4 V13.6 Z" fill="#1c1c1c"/><path d="M4 10 L6 8 L8 8.6 L10 5.6 L11.8 6.6 L13.4 3.4 L14.6 4.6 L15.8 2.4" fill="none" stroke="#3a95d8" stroke-width="2.2" stroke-linejoin="round"/></svg><div class="t " style="left:233.5px;top:148.00px;font-size:12px;line-height:14px;color:#000;">Auswertung</div><svg class="a" style="left:204px;top:176px;" width="20" height="18" viewBox="0 0 20 18"><path d="M2.4 8.2 L9 1.8 L15.6 8.2" fill="none" stroke="#1c1c1c" stroke-width="1.5"/><circle cx="6.4" cy="9" r="1.7" fill="#1c1c1c"/><circle cx="11.6" cy="9" r="1.7" fill="#1c1c1c"/><circle cx="9" cy="12" r="1.9" fill="#1c1c1c"/><path d="M3.5 12.5 C4 11 5 10.8 6.5 11.2 M14.5 12.5 C14 11 13 10.8 11.5 11.2 M6 15.2 C6.5 13.8 7.5 13.5 9 13.5 C10.5 13.5 11.5 13.8 12 15.2 Z" fill="#1c1c1c" stroke="#1c1c1c" stroke-width="1"/></svg><div class="t " style="left:233.5px;top:176.00px;font-size:12px;line-height:14px;color:#000;">Mitarbeiter</div><svg class="a" style="left:204px;top:204px;" width="20" height="18" viewBox="0 0 20 18"><path d="M2.6 13 V2.6 H7.2 L8.6 4 H13.6 V6.5" fill="none" stroke="#1c1c1c" stroke-width="1.3" stroke-linejoin="round"/><path d="M2.6 13 H8" fill="none" stroke="#1c1c1c" stroke-width="1.3"/><rect x="4.7" y="6.4" width="3.4" height="7.2" fill="#1c1c1c"/><path d="M8.2 9.6 L12.6 6.8 L17 9.6 Z" fill="#1c1c1c"/><rect x="8.4" y="9.6" width="8.4" height="5" fill="#1c1c1c"/><rect x="10.4" y="10.4" width="4.4" height="3.4" fill="#3a95d8"/><rect x="7.8" y="14.6" width="9.6" height="1.6" fill="#1c1c1c"/></svg><div class="t " style="left:233.5px;top:204.00px;font-size:12px;line-height:14px;color:#000;">Faktura</div><svg class="a" style="left:204px;top:232px;" width="20" height="18" viewBox="0 0 20 18"><path d="M2.6 13 V2.6 H7.2 L8.6 4 H13.6 V6.5" fill="none" stroke="#1c1c1c" stroke-width="1.3" stroke-linejoin="round"/><path d="M2.6 13 H8" fill="none" stroke="#1c1c1c" stroke-width="1.3"/><rect x="4.7" y="6.4" width="3.4" height="7.2" fill="#1c1c1c"/><rect x="9.2" y="7" width="7.6" height="8.6" fill="#fff" stroke="#1c1c1c" stroke-width="1.1"/><rect x="8.8" y="6.4" width="8.4" height="2.6" fill="#3a95d8"/><path d="M8.8 6.4 H17.2" stroke="#999" stroke-width="0.8"/><text x="9.6" y="14.6" font-size="5.6" font-family="Liberation Sans" font-weight="bold" fill="#1c1c1c">31</text></svg><div class="t " style="left:233.5px;top:232.00px;font-size:12px;line-height:14px;color:#000;">Aufgaben</div><svg class="a" style="left:204px;top:254px;" width="20" height="18" viewBox="0 0 20 18"><path d="M2.6 13 V2.6 H7.2 L8.6 4 H13.6 V6.5" fill="none" stroke="#1c1c1c" stroke-width="1.3" stroke-linejoin="round"/><path d="M2.6 13 H8" fill="none" stroke="#1c1c1c" stroke-width="1.3"/><rect x="4.7" y="6.4" width="3.4" height="7.2" fill="#1c1c1c"/><rect x="9.2" y="7" width="7.6" height="8.6" fill="#fff" stroke="#1c1c1c" stroke-width="1.1"/><rect x="8.8" y="6.4" width="8.4" height="2.6" fill="#3a95d8"/><path d="M8.8 6.4 H17.2" stroke="#999" stroke-width="0.8"/><text x="9.6" y="14.6" font-size="5.6" font-family="Liberation Sans" font-weight="bold" fill="#1c1c1c">31</text></svg><div class="t " style="left:233.5px;top:254.00px;font-size:12px;line-height:14px;color:#000;">Aufgabenvorlagen</div><svg class="a" style="left:204px;top:276px;" width="20" height="18" viewBox="0 0 20 18"><path d="M2.6 13 V2.6 H7.2 L8.6 4 H13.6 V6.5" fill="none" stroke="#1c1c1c" stroke-width="1.3" stroke-linejoin="round"/><path d="M2.6 13 H8" fill="none" stroke="#1c1c1c" stroke-width="1.3"/><rect x="4.7" y="6.4" width="3.4" height="7.2" fill="#1c1c1c"/><circle cx="12.8" cy="8.6" r="2.5" fill="#3a95d8" stroke="#fff" stroke-width="0.6"/><circle cx="10.6" cy="12.6" r="2.5" fill="#3a95d8" stroke="#fff" stroke-width="0.6"/><circle cx="15" cy="12.6" r="2.5" fill="#3a95d8" stroke="#fff" stroke-width="0.6"/></svg><div class="t " style="left:233.5px;top:276.00px;font-size:12px;line-height:14px;color:#000;">Leistungen/Kosten</div><svg class="a" style="left:204px;top:298px;" width="20" height="18" viewBox="0 0 20 18"><path d="M2.6 13 V2.6 H7.2 L8.6 4 H13.6 V6.5" fill="none" stroke="#1c1c1c" stroke-width="1.3" stroke-linejoin="round"/><path d="M2.6 13 H8" fill="none" stroke="#1c1c1c" stroke-width="1.3"/><rect x="4.7" y="6.4" width="3.4" height="7.2" fill="#1c1c1c"/><circle cx="12.8" cy="8.6" r="2.5" fill="#3a95d8" stroke="#fff" stroke-width="0.6"/><circle cx="10.6" cy="12.6" r="2.5" fill="#3a95d8" stroke="#fff" stroke-width="0.6"/><circle cx="15" cy="12.6" r="2.5" fill="#3a95d8" stroke="#fff" stroke-width="0.6"/></svg><div class="t " style="left:233.5px;top:298.00px;font-size:12px;line-height:14px;color:#000;">Leistungsvorlagen</div><svg class="a" style="left:204px;top:320px;" width="20" height="18" viewBox="0 0 20 18"><path d="M2.6 13 V2.6 H7.2 L8.6 4 H13.6 V6.5" fill="none" stroke="#1c1c1c" stroke-width="1.3" stroke-linejoin="round"/><path d="M2.6 13 H8" fill="none" stroke="#1c1c1c" stroke-width="1.3"/><rect x="4.7" y="6.4" width="3.4" height="7.2" fill="#1c1c1c"/><path d="M12.5 7.2 L15.6 9.6 V15.8" fill="none" stroke="#3a95d8" stroke-width="1.1"/><path d="M8.4 8.2 H12.2 L14.4 10.4 V15.6 H8.4 Z" fill="#fff" stroke="#1c1c1c" stroke-width="1.1"/></svg><div class="t " style="left:233.5px;top:320.00px;font-size:12px;line-height:14px;color:#000;">Dokumente</div><svg class="a" style="left:204px;top:348px;" width="20" height="18" viewBox="0 0 20 18"><circle cx="11.2" cy="4" r="3.3" fill="#1c1c1c"/><path d="M10.5 15 C10.5 11 12 9 13.6 9 C15.5 9 16.4 11 16.4 15 Z" fill="#1c1c1c"/><circle cx="6.6" cy="6" r="3.8" fill="#1c1c1c" stroke="#f2f2f2" stroke-width="0.6"/><ellipse cx="6.6" cy="12.8" rx="4.6" ry="2.4" fill="none" stroke="#1c1c1c" stroke-width="1.2"/><path d="M6.6 10.2 V15.4 M10.6 10.5 L10.2 14.2" stroke="#3a95d8" stroke-width="1.1"/></svg><div class="t " style="left:233.5px;top:348.00px;font-size:12px;line-height:14px;color:#000;">Kunden</div><div class="a" style="left:199px;top:4px;width:56px;height:28px;box-sizing:border-box;border:2px solid #c00000"></div><div class="a" style="left:197px;top:291px;width:164px;height:30px;box-sizing:border-box;border:2px solid #c00000"></div><svg class="a" style="left:340px;top:305px" width="30" height="40" viewBox="0 0 30 40">
<defs><filter id="cs" x="-50%" y="-50%" width="200%" height="200%"><feGaussianBlur in="SourceAlpha" stdDeviation="1.3"/><feOffset dx="1.5" dy="2"/><feComponentTransfer><feFuncA type="linear" slope="0.5"/></feComponentTransfer><feMerge><feMergeNode/><feMergeNode in="SourceGraphic"/></feMerge></filter></defs>
<defs><linearGradient id="cg" x1="0" y1="0" x2="0" y2="1"><stop offset="0.45" stop-color="#fff"/><stop offset="1" stop-color="#d8d8d8"/></linearGradient></defs><path filter="url(#cs)" d="M6.9 6.3 L6.9 27.3 L11.4 23.6 L14.3 30.4 L17.1 29.2 L15.1 22.3 L20.4 21.7 Z" fill="url(#cg)" stroke="#111" stroke-width="1.25" stroke-linejoin="round"/>
</svg>
</body></html>
